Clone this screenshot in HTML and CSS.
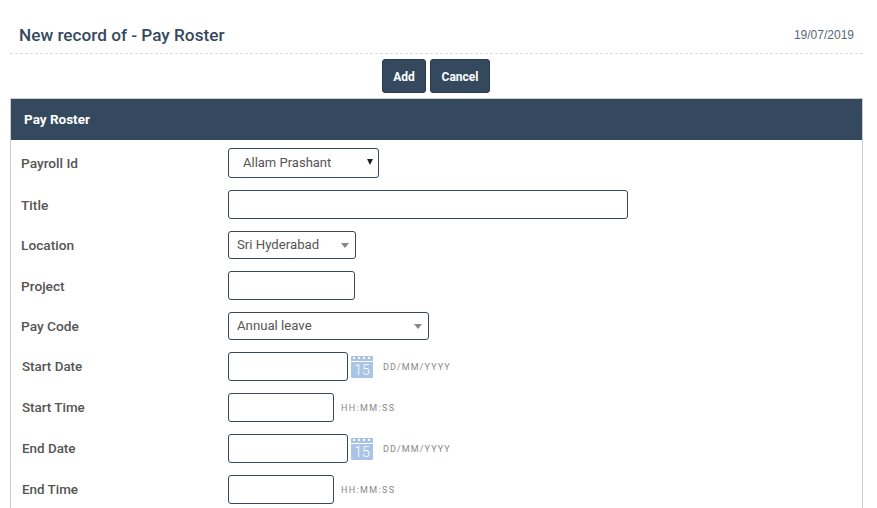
FILE: index.html
```html
<!DOCTYPE html>
<html lang="en">
<head>
    <meta charset="UTF-8">
    <meta name="viewport" content="width=device-width, initial-scale=1.0">
    <title>New record of - Pay Roster</title>
    <link rel="stylesheet" href="styles.css">
</head>
<body>
    <div class="page-head">
        <h1>New record of - Pay Roster</h1>
        <span class="today">19/07/2019</span>
    </div>
    <div class="actions">
        <button class="btn btn-add">Add</button>
        <button class="btn btn-cancel">Cancel</button>
    </div>
    <div class="panel">
        <div class="panel-title">Pay Roster</div>
        <form class="panel-body">
            <div class="row row-first">
                <label>Payroll Id</label>
                <span class="select-wrap">
                    <select class="native-select">
                        <option>Allam Prashant</option>
                    </select>
                </span>
            </div>
            <div class="row">
                <label>Title</label>
                <input type="text" class="input input-title">
            </div>
            <div class="row row-short">
                <label>Location</label>
                <span class="combo combo-location">Sri Hyderabad</span>
            </div>
            <div class="row">
                <label>Project</label>
                <input type="text" class="input input-project">
            </div>
            <div class="row row-short">
                <label>Pay Code</label>
                <span class="combo combo-paycode">Annual leave</span>
            </div>
            <div class="row">
                <label class="label-indent">Start Date</label>
                <input type="text" class="input input-date">
                <span class="cal">15</span>
                <span class="hint hint-date">DD/MM/YYYY</span>
            </div>
            <div class="row">
                <label class="label-indent">Start Time</label>
                <input type="text" class="input input-time">
                <span class="hint hint-time">HH:MM:SS</span>
            </div>
            <div class="row">
                <label class="label-indent">End Date</label>
                <input type="text" class="input input-date">
                <span class="cal">15</span>
                <span class="hint hint-date">DD/MM/YYYY</span>
            </div>
            <div class="row">
                <label class="label-indent">End Time</label>
                <input type="text" class="input input-time">
                <span class="hint hint-time">HH:MM:SS</span>
            </div>
        </form>
    </div>
</body>
</html>
```

FILE: styles.css
```css
html, body {
    height: 100%;
    overflow: hidden;
}

body {
    font-family: "Roboto", sans-serif;
    margin: 0;
    padding: 0 14px 0 10px;
    background-color: #fff;
    color: #444;
}

.page-head {
    display: flex;
    justify-content: space-between;
    align-items: flex-end;
    height: 53px;
    padding: 0 9px;
    border-bottom: 1px dashed #ddd;
}

.page-head h1 {
    margin: 0 0 9px 0;
    font-size: 17.2px;
    line-height: 18px;
    font-weight: 500;
    color: #34495e;
}

.today {
    margin-bottom: 11px;
    font-family: "Liberation Sans", sans-serif;
    font-size: 12px;
    line-height: 14px;
    color: #5a6878;
}

.actions {
    display: flex;
    justify-content: center;
    gap: 4px;
    margin-top: 5px;
    padding-right: 1px;
    height: 34px;
}

.btn {
    padding: 1px 0 0 0;
    height: 34px;
    font-family: "Roboto", sans-serif;
    font-size: 12px;
    font-weight: 700;
    color: #fff;
    background-color: #34495e;
    border: 1px solid #2a3b4d;
    border-radius: 3px;
}

.btn-add {
    width: 44px;
}

.btn-cancel {
    width: 60px;
}

.panel {
    margin-top: 5px;
    height: 600px;
    border: 1px solid #ccc;
}

.panel-title {
    height: 41px;
    padding-left: 13px;
    font-size: 13.5px;
    font-weight: 700;
    line-height: 41px;
    color: #fff;
    background-color: #34495e;
}

.panel-body {
    display: flex;
    flex-direction: column;
    gap: 12px;
    padding-top: 8px;
}

.row {
    display: flex;
    align-items: center;
    height: 29px;
    padding-left: 10px;
}

.row-first {
    height: 30px;
}

.row-short {
    height: 28px;
}

.row label {
    flex: 0 0 207px;
    font-size: 13.7px;
    font-weight: 500;
    color: #555;
}

.row .label-indent {
    flex-basis: 206px;
    margin-left: 1px;
    font-size: 13.4px;
}

.input, .combo, .native-select {
    box-sizing: border-box;
    margin: 0;
    background-color: #fff;
    border: 1px solid #34495e;
    border-radius: 3px;
    outline: none;
}

.input {
    height: 29px;
}

.input-title {
    width: 400px;
}

.input-project {
    width: 127px;
}

.input-date {
    width: 120px;
}

.input-time {
    width: 106px;
}

.select-wrap {
    position: relative;
    display: block;
    height: 30px;
}

.select-wrap::after {
    content: "";
    position: absolute;
    top: 11px;
    right: 6px;
    border-top: 6px solid #222;
    border-left: 3px solid transparent;
    border-right: 3px solid transparent;
}

.native-select {
    display: block;
    appearance: none;
    width: 151px;
    height: 30px;
    padding: 0 0 1px 14px;
    font-family: "Roboto", sans-serif;
    font-size: 13px;
    color: #555;
}

.combo {
    position: relative;
    display: block;
    height: 28px;
    padding-left: 8px;
    font-size: 13.2px;
    line-height: 26px;
    color: #555;
}

.combo::after {
    content: "";
    position: absolute;
    top: 11px;
    right: 6px;
    border-top: 5px solid #888;
    border-left: 4px solid transparent;
    border-right: 4px solid transparent;
}

.combo-location {
    width: 128px;
}

.combo-paycode {
    width: 201px;
}

/* calendar icon: dotted strip on top, day number below */
.cal {
    position: relative;
    box-sizing: border-box;
    flex: none;
    width: 22px;
    height: 22px;
    margin: 1px 0 0 3px;
    padding-top: 7px;
    font-size: 14px;
    font-weight: 300;
    line-height: 15px;
    text-align: center;
    color: #fff;
    background-color: #a9c4e6;
    border-radius: 1px;
}

.cal::before {
    content: "";
    position: absolute;
    top: 1px;
    left: 2px;
    right: 2px;
    height: 4px;
    border-bottom: 1px solid #fff;
    margin: 0 -2px;
    background: repeating-linear-gradient(90deg, transparent 0 2px, #fff 2px 4px, transparent 4px 5px) 0 0 / 100% 2px no-repeat;
}

.hint {
    font-size: 9px;
    letter-spacing: 1.1px;
    color: #888;
}

.hint-date {
    margin-left: 10px;
}

.hint-time {
    margin-left: 7px;
    letter-spacing: 1.35px;
}
```
